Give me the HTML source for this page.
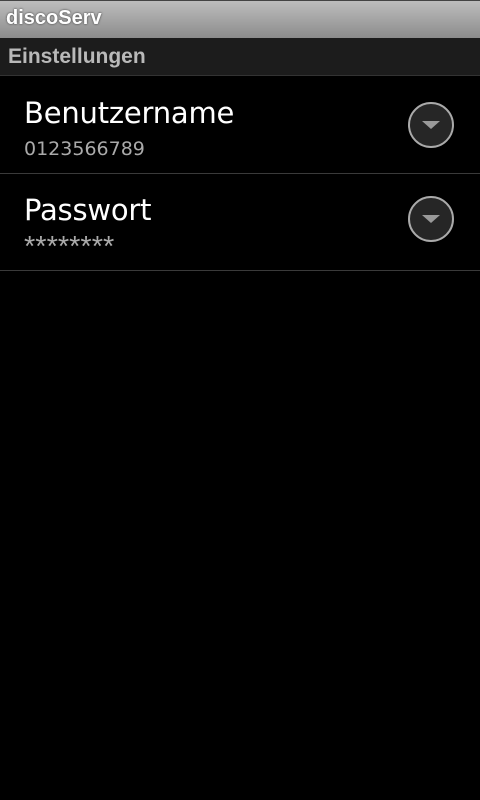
<!DOCTYPE html>
<html><head><style>
body{margin:0;width:480px;height:800px;background:#000;font-family:"DejaVu Sans","Liberation Sans",sans-serif;position:relative;overflow:hidden}
.t{position:absolute;left:0;top:0;width:480px;height:38px;background:linear-gradient(#bdbdbd,#8c8c8c);border-top:1px solid #444;box-sizing:border-box}
.t span{position:absolute;left:6px;top:6px;color:#fff;font-weight:bold;font-size:20px;font-family:"Liberation Sans",sans-serif;text-shadow:0 0 2px #333}
.h{position:absolute;left:0;top:38px;width:480px;height:38px;background:#1c1c1c;border-bottom:1px solid #333;box-sizing:border-box}
.h span{position:absolute;left:8px;top:7px;color:#b9b9b9;font-weight:bold;font-size:21px;font-family:"Liberation Sans",sans-serif}
.r{position:absolute;left:0;width:480px;height:97px;border-bottom:1px solid #3a3a3a;box-sizing:border-box}
.a{position:absolute;left:24px;top:19px;color:#fff;font-size:29px;letter-spacing:-0.2px}
.b{position:absolute;left:24px;top:61px;color:#aaa;font-size:19px}
.c{position:absolute;left:408px;top:25px;width:42px;height:42px;border:2px solid #aaa;border-radius:50%;background:#262626}
.c:after{content:"";position:absolute;left:12px;top:17px;border-left:9px solid transparent;border-right:9px solid transparent;border-top:8px solid #999}
</style></head><body>
<div class="t"><span>discoServ</span></div>
<div class="h"><span>Einstellungen</span></div>
<div class="r" style="top:77px"><div class="a">Benutzername</div><div class="b">0123566789</div><div class="c"></div></div>
<div class="r" style="top:174px"><div class="a" style="top:19px">Passwort</div><div class="b" style="top:57px;font-size:29px;font-family:'Liberation Sans',sans-serif">********</div><div class="c" style="top:22px"></div></div>
</body></html>
